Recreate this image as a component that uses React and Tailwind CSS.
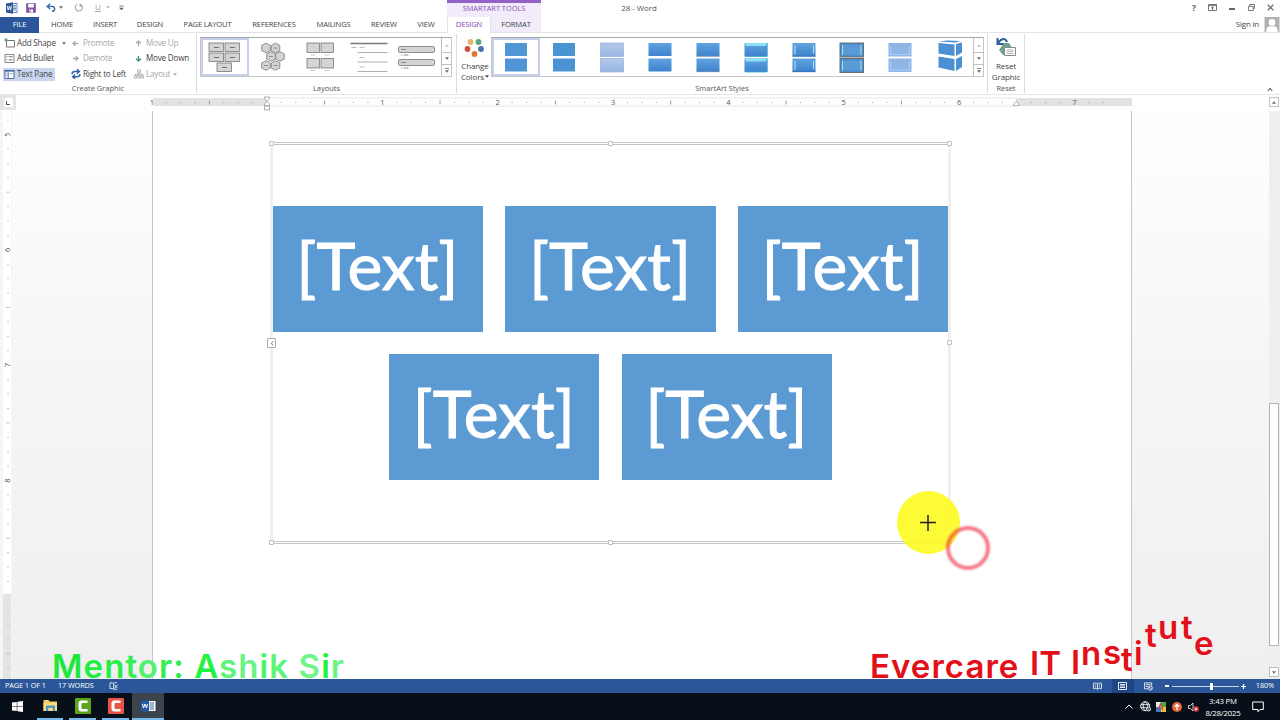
const TABS = [
  { name: 'HOME', cls: 'w-[42px]' },
  { name: 'INSERT', cls: 'w-[44px]' },
  { name: 'DESIGN', cls: 'w-[46px]' },
  { name: 'PAGE LAYOUT', cls: 'w-[69px]' },
  { name: 'REFERENCES', cls: 'w-[64px]' },
  { name: 'MAILINGS', cls: 'w-[55px]' },
  { name: 'REVIEW', cls: 'w-[46px]' },
  { name: 'VIEW', cls: 'w-[38px]' },
];

const INCH = 115.35;

const Caret = ({ className = '' }) => (
  <svg viewBox="0 0 6 4" className={`w-[4px] h-[3px] ${className}`}>
    <path d="M0 0h6L3 4z" fill="currentColor" />
  </svg>
);

const WordIcon = () => (
  <svg viewBox="0 0 12 12" className="w-[12px] h-[12px]">
    <rect x="6" y="1.5" width="5" height="9" fill="#fff" stroke="#2b579a" strokeWidth=".7" />
    <path d="M7 3.5h3M7 5h3M7 6.5h3M7 8h3" stroke="#2b579a" strokeWidth=".7" />
    <path d="M0 1.4 7 .2v11.6L0 10.6z" fill="#2b579a" />
    <path d="m1.3 3.8.9 4.3 1.2-4 1.2 4 .9-4.5" fill="none" stroke="#fff" strokeWidth=".9" />
  </svg>
);

const TitleBar = () => (
  <div className="flex h-[17px] shrink-0 items-center text-[#666]">
    <div className="flex w-[447px] items-center pb-[2px] pl-[6px]">
      <WordIcon />
      <svg viewBox="0 0 10 10" className="ml-[8px] h-[10px] w-[10px]">
        <path d="M.7.7h8.6v8.6H.7z" fill="#80579d" stroke="#80579d" strokeWidth="1" />
        <path d="M2.2 .8h5.6v3.600H2.200zM3 6.500h4v3H3z" fill="#fff" />
        <path d="M3.500 7.200h1.200v2H3.500z" fill="#80579d" />
      </svg>
      <svg viewBox="0 0 10 9" className="ml-[10px] h-[9px] w-[10px]" fill="none" stroke="#3566a8" strokeWidth="1.4">
        <path d="M4.2.8 1.2 3.4 4.2 6M1.4 3.4h4.2c4 0 4 4.6.4 4.9" />
      </svg>
      <Caret className="ml-[3px]" />
      <svg viewBox="0 0 10 10" className="ml-[11px] h-[9px] w-[10px] text-[#aaa]" fill="none" stroke="currentColor" strokeWidth="1.2">
        <path d="M3 1.4a4 4 0 1 0 3.9.1M6.2.5v3h3" />
      </svg>
      <span className="ml-[11px] border-b border-[#aaa] text-[8px] leading-[8px] text-[#999]">U</span>
      <Caret className="ml-[5px] text-[#bbb]" />
      <svg viewBox="0 0 6 6" className="ml-[9px] h-[6px] w-[5px]">
        <path d="M.5.6h5" stroke="#666" />
        <path d="M0 2.7h6L3 5.7z" fill="#666" />
      </svg>
    </div>
    <div className="h-full w-[94px] border-t-[3px] border-[#9262c8] bg-[#f1ebfa] text-center text-[7.4px] leading-[10px] text-[#8a55b8]">
      SMARTART TOOLS
    </div>
    <div className="w-[196px] text-center text-[7.9px] text-[#555]">28 - Word</div>
    <div className="ml-auto flex items-center pb-[2px]">
      <span className="mr-[12px] text-[9px] font-bold leading-none">?</span>
      <svg viewBox="0 0 9 7" className="mr-[12px] h-[7px] w-[9px]" fill="none" stroke="currentColor">
        <path d="M.5.5h8v6h-8zM.5 1.6h8M4.5 6V3M3 4.3 4.5 2.9 6 4.3" strokeWidth=".9" />
      </svg>
      <span className="mr-[13px] mt-[3px] h-[1.3px] w-[6px] bg-[#666]" />
      <svg viewBox="0 0 8 8" className="mr-[12px] h-[7px] w-[7px]" fill="none" stroke="currentColor">
        <path d="M2 2V.6h5.5V5H6M.5 2.6H6v4.8H.5z" />
      </svg>
      <svg viewBox="0 0 8 8" className="mr-[6px] h-[7px] w-[7px]" stroke="currentColor" strokeWidth="1.4">
        <path d="m.8.8 6.4 6.4M7.2.8.8 7.2" />
      </svg>
    </div>
  </div>
);

const TabRow = () => (
  <div className="flex h-[16px] shrink-0 border-b border-[#e3e3e3] text-center text-[7.6px] leading-[15px] tracking-[-0.02em] text-[#444]">
    <div className="mr-[2px] h-[16px] w-[39px] bg-[#2b579a] text-white">FILE</div>
    {TABS.map((t) => (
      <div key={t.name} className={t.cls}>{t.name}</div>
    ))}
    <div className="ml-[2px] h-[16px] w-[44px] border-x border-[#e6dff0] bg-white text-[#8146b5]">DESIGN</div>
    <div className="w-[50px] bg-[#f1ebfa]">FORMAT</div>
    <div className="ml-auto flex text-[7.9px]">
      <span className="mr-[5px]">Sign in</span>
      <svg viewBox="0 0 16 16" className="h-[15px] w-[16px]">
        <path d="M0 0h16v16H0z" fill="#b0b0b0" />
        <circle cx="8" cy="5.8" r="3.6" fill="#fff" />
        <path d="M1.8 16c0-7 3.6-6 6.2-6s6.200-1 6.200 6z" fill="#fff" />
      </svg>
    </div>
  </div>
);

const Arrow = ({ dir, color = '#aaa' }) => {
  const paths = {
    left: 'M7 4H1.200M3.800 1.300 1.200 4l2.600 2.700',
    right: 'M1 4h5.800M4.200 1.300 6.800 4 4.200 6.700',
    up: 'M4 7V1.200M1.300 3.800 4 1.200l2.700 2.600',
    down: 'M4 1v5.800M1.300 4.200 4 6.800l2.700-2.600',
  };
  return (
    <svg viewBox="0 0 8 8" className="h-[7px] w-[7px]" fill="none" stroke={color} strokeWidth="1.500">
      <path d={paths[dir]} />
    </svg>
  );
};

const Command = ({ icon, label, disabled = false, caret = false, className = '' }) => (
  <div className={`flex h-[13px] items-center ${disabled ? 'text-[#a6a6a6]' : 'text-[#444]'} ${className}`}>
    <span className="flex w-[13px] justify-center">{icon}</span>
    <span className="ml-px whitespace-nowrap">{label}</span>
    {caret && <Caret className="ml-[3px]" />}
  </div>
);

const GroupLabel = ({ children }) => (
  <div className="mt-auto h-[9px] text-center text-[7.5px] leading-[9px] text-[#555]">{children}</div>
);

const CreateGraphic = () => (
  <div className="flex w-[197px] flex-col border-r border-[#dcdcdc]">
    <div className="mt-[2.500px] grid grid-cols-[69px_62px_1fr] gap-y-[2.500px] pl-[3px] text-[8.100px] tracking-[-0.2px]">
      <div className="flex items-center">
        <Command
          label="Add Shape"
          icon={
            <svg viewBox="0 0 11 10" className="h-[10px] w-[11px]" fill="none">
              <path d="M2.500 2.500h8v6.500h-8z" stroke="#777" />
              <path d="M2 0v4M0 2h4" stroke="#4d9a7a" strokeWidth="1.200" />
            </svg>
          }
        />
        <Caret className="ml-auto mr-[6px] text-[#666]" />
      </div>
      <Command disabled label="Promote" icon={<Arrow dir="left" />} className="-ml-[3px]" />
      <Command disabled label="Move Up" icon={<Arrow dir="up" />} className="-ml-[2px]" />
      <Command
        label="Add Bullet"
        icon={
          <svg viewBox="0 0 11 10" className="h-[9px] w-[11px]" fill="none">
            <path d="M.5.5h10v9H.5z" stroke="#777" />
            <path d="M2 3h1.200M2 6.500h1.200M4.500 3H9M4.500 6.500H9" stroke="#666" />
          </svg>
        }
      />
      <Command disabled label="Demote" icon={<Arrow dir="right" />} className="-ml-[3px]" />
      <Command label="Move Down" icon={<Arrow dir="down" color="#3f8f6b" />} className="-ml-[2px]" />
      <Command
        label="Text Pane"
        className="w-[52px] bg-[#c9d5ef]"
        icon={
          <svg viewBox="0 0 11 10" className="h-[9px] w-[11px]" fill="none">
            <path d="M.5.5h10v9H.5z" fill="#fff" stroke="#3a6096" />
            <path d="M0 1h11" stroke="#3a6096" strokeWidth="1.500" />
            <path d="M4 2v7" stroke="#3a6096" />
            <path d="M1.500 4h1.500M1.500 6h1.500M5.500 4h3.500" stroke="#8aa5cc" />
          </svg>
        }
      />
      <Command
        label="Right to Left"
        className="-ml-[3px]"
        icon={
          <svg viewBox="0 0 10 10" className="h-[10px] w-[10px]" fill="none" stroke="#2f64a5" strokeWidth="1.500">
            <path d="M1 5.200c0-2.400 1-2.700 3-2.700h4M6 .3l2.300 2.200L6 4.700M9 5c0 2.400-1 2.700-3 2.700H2M4 5.500 1.700 7.700 4 9.800" />
          </svg>
        }
      />
      <Command
        disabled
        caret
        label="Layout"
        className="-ml-[2px]"
        icon={
          <svg viewBox="0 0 11 10" className="h-[10px] w-[10px]" fill="none" stroke="#aaa">
            <path d="M4 .5h3v2.500H4zM.5 6.500h2.500v3H.5zM4.300 6.500h2.500v3H4.300zM8 6.500h2.500v3H8zM5.500 3v3.500M1.700 6.500V5h7.600v1.500" />
          </svg>
        }
      />
    </div>
    <GroupLabel>Create Graphic</GroupLabel>
  </div>
);

const GalleryScroll = () => (
  <div className="ml-auto flex w-[10px] flex-col border-l border-[#c0c0c0]">
    <div className="flex h-[14px] items-center justify-center text-[#c0c0c0]">
      <Caret className="rotate-180" />
    </div>
    <div className="flex h-[13px] items-center justify-center border-y border-[#c0c0c0] text-[#666]">
      <Caret />
    </div>
    <div className="flex flex-1 flex-col items-center justify-center gap-px text-[#666]">
      <span className="h-px w-[4px] bg-[#888]" />
      <Caret />
    </div>
  </div>
);

const hex = (cx, cy) => `M${cx - 5} ${cy}l2.500-4.300h5l2.500 4.300-2.500 4.300h-5z`;

const LAYOUT_ART = [
  <g key="block">
    {[[0, 0], [16, 0], [0, 10], [16, 10], [8, 20]].map(([x, y]) => (
      <g key={`${x}-${y}`}>
        <rect x={8 + x} y={5 + y} width="14.500" height="8.500" />
        <path d={`M${13 + x} ${9.500 + y}h5`} stroke="#555" />
      </g>
    ))}
  </g>,
  <g key="hex">
    {[[17, 10], [26.500, 10], [22, 18.500], [31, 18.500], [17, 27.500], [26.500, 27.500]].map(([x, y], i) => (
      <g key={i}>
        <path d={`M${x} ${y - 4.800}l4.300 2.300v5l-4.300 2.300-4.300-2.300v-5z`} />
        {i % 3 !== 0 && <path d={`M${x - 2} ${y}h4`} />}
      </g>
    ))}
  </g>,
  <g key="caption">
    {[[10, 5], [24, 5], [10, 20.500], [24, 20.500]].map(([x, y]) => (
      <g key={`${x}-${y}`}>
        <rect x={x} y={y} width="12.500" height="9.500" />
        <path d={`M${x + 3.500} ${y + 12}h5`} stroke="#bbb" />
      </g>
    ))}
  </g>,
  <g key="lines">
    <path d="M5.500 5.500h37" stroke="#777" strokeWidth="1.300" />
    <path d="M12.500 14.500h30M12.500 24h30M12.500 33.500h30" stroke="#999" />
    <path d="M6.500 9.500h5M14.500 9.500h5M14.500 19.500h5M14.500 29h5" stroke="#aaa" />
  </g>,
  <g key="bars">
    <rect x="5.500" y="8.500" width="36" height="6" rx="1.500" />
    <rect x="5.500" y="21.500" width="36" height="6" rx="1.500" />
    <path d="M8 11.500h5M8 17h1M10.500 17h5M8 24.500h5M8 30h1M10.500 30h5" />
  </g>,
];

const Layouts = () => (
  <div className="flex w-[260px] flex-col border-r border-[#dcdcdc]">
    <div className="ml-[3px] mt-[3px] flex h-[40px] w-[252px] border border-[#c6c6c6] border-t-[#a8a8a8]">
      {LAYOUT_ART.map((art, i) => (
        <div key={i} className={`h-[38px] w-[48px] ${i === 0 ? 'outline-2 -outline-offset-2 outline-[#c5d1ec]' : ''}`}>
          <svg viewBox="0 0 48 38" className="h-[38px] w-[48px]" fill="#d4d4d4" stroke="#777" strokeWidth=".8">
            {art}
          </svg>
        </div>
      ))}
      <GalleryScroll />
    </div>
    <GroupLabel>Layouts</GroupLabel>
  </div>
);

const StyleTile = ({ kind, y }) => {
  const x = 13;
  if (kind === 'flat') return <rect x={x} y={y} width="22" height="13" fill="#5096d6" />;
  if (kind === 'outline') return <rect x={x} y={y} width="22" height="13" fill="#4a94d4" />;
  if (kind === 'subtle') return <rect x="12.500" y={y} width="23" height="13.500" fill="url(#pale)" stroke="#92afdc" strokeWidth=".7" />;
  if (kind === 'moderate') return <rect x="12.500" y={y} width="23" height="13" fill="url(#deep)" />;
  if (kind === 'intense')
    return (
      <g>
        <rect x="12.500" y={y} width="23" height="13.500" fill="url(#deep)" />
        <path d={`M12.500 ${y + 13.200}h23`} stroke="#8b98ad" strokeWidth=".7" />
      </g>
    );
  if (kind === 'polished')
    return (
      <g>
        <rect x="12.500" y={y} width="23" height="13.500" fill="url(#deep)" />
        <path d={`M12.500 ${y}h23l-2 3h-19z`} fill="#8ce0f5" />
        <path d={`M35 ${y}v13.500h-22`} fill="none" stroke="#3aa9d8" strokeWidth=".8" />
      </g>
    );
  if (kind === 'inset')
    return (
      <g>
        <rect x="12.500" y={y} width="23" height="13.500" fill="url(#deep)" />
        <path d={`M15 ${y + 2.500}v9M33.500 ${y + 2.500}v8`} stroke="#a5e0fa" strokeWidth="1.200" />
        <path d={`M12.500 ${y + 13.200}h23`} stroke="#2f6fb5" strokeWidth=".8" />
      </g>
    );
  if (kind === 'cartoon')
    return (
      <g>
        <rect x="12" y={y} width="23.500" height="14" fill="#4a90d2" stroke="#6b6f70" />
        <rect x="14.500" y={y + 2.200} width="18.500" height="9.500" fill="#5b9bd5" />
        <path d={`M14.500 ${y + 2}v10M33 ${y + 2}v10`} stroke="#a5e0fa" />
      </g>
    );
  return (
    <g>
      <rect x="12.500" y={y} width="23" height="13.500" fill="#8fb4e6" />
      <path d={`M14.500 ${y + 3}v8M33.500 ${y + 3}v8M14 ${y + 11.500}h20`} stroke="#a9d0f2" strokeWidth="1.200" fill="none" />
    </g>
  );
};

const STYLES = ['flat', 'outline', 'subtle', 'moderate', 'intense', 'polished', 'inset', 'cartoon', 'powder'];

const SmartArtStyles = () => (
  <div className="flex w-[531px] flex-col border-r border-[#dcdcdc]">
    <div className="flex h-[46px]">
      <div className="flex w-[34px] flex-col items-center pt-[4px] text-[8px] leading-[10.500px] tracking-[-0.1px] text-[#444]">
        <svg viewBox="0 0 20 20" className="h-[20px] w-[20px] shrink-0">
          <circle cx="6.500" cy="4" r="2.900" fill="#e8b66a" />
          <circle cx="14.500" cy="4" r="2.900" fill="#5da283" />
          <circle cx="3.500" cy="11" r="2.900" fill="#c9503c" />
          <circle cx="17" cy="11" r="2.900" fill="#4672ae" />
          <circle cx="10.500" cy="16" r="2.900" fill="#dd7831" />
        </svg>
        <span className="ml-[2px] mt-[3px]">Change</span>
        <span className="ml-[2px] flex items-center whitespace-nowrap">
          Colors
          <Caret className="ml-px" />
        </span>
      </div>
      <div className="mt-[3px] flex h-[40px] w-[493px] border border-[#c6c6c6] border-t-[#a8a8a8]">
        <svg className="h-0 w-0">
          <defs>
            <linearGradient id="pale" x1="0" y1="0" x2="0" y2="1">
              <stop offset="0" stopColor="#b4c9ea" />
              <stop offset="1" stopColor="#98b6e2" />
            </linearGradient>
            <linearGradient id="deep" x1="0" y1="0" x2="0" y2="1">
              <stop offset="0" stopColor="#61a3e0" />
              <stop offset="1" stopColor="#3c82cc" />
            </linearGradient>
          </defs>
        </svg>
        {STYLES.map((kind, i) => (
          <div key={kind} className={`h-[38px] w-[48px] ${i === 0 ? 'outline-2 -outline-offset-2 outline-[#c5d1ec]' : ''}`}>
            <svg viewBox="0 0 48 38" className="h-[38px] w-[48px]">
              <StyleTile kind={kind} y={5} />
              <StyleTile kind={kind} y={20.500} />
            </svg>
          </div>
        ))}
        <svg viewBox="0 0 48 38" className="h-[38px] w-[48px]">
          <path d="m15 3.500 16 1 6-1.500-14-.5zM14.500 5l16 1.500V18l-16-2.500zM32 6l6-1.500v10L32 18zM14.500 18.500 30.500 21v12l-16-3.500zM32 21l6-3v11l-6 4z" fill="#4a90d2" />
        </svg>
        <GalleryScroll />
      </div>
    </div>
    <GroupLabel>SmartArt Styles</GroupLabel>
  </div>
);

const Ribbon = () => (
  <div className="flex h-[62px] shrink-0 border-b border-[#e6e6e6] pb-px pt-[1px]">
    <CreateGraphic />
    <Layouts />
    <SmartArtStyles />
    <div className="flex w-[37px] flex-col border-r border-[#dcdcdc] text-center text-[8px] leading-[10.500px] tracking-[-0.1px] text-[#444]">
      <svg viewBox="0 0 22 20" className="ml-[7px] mt-[3px] h-[20px] w-[22px]">
        <path d="m4 13 5-7h5l5 8v4H8z" fill="#6da38c" />
        <path d="M2.500 1v6h6M3 6.500C5 2 10 0 12 5" fill="none" stroke="#2f5f96" strokeWidth="2" />
        <path d="M9.500 10.500h11v8h-11z" fill="#fff" stroke="#888" />
        <path d="M11.500 13h7M11.500 14.700h7M11.500 16.500h7" stroke="#999" strokeWidth=".7" />
      </svg>
      <span className="mt-[4px]">Reset</span>
      <span>Graphic</span>
      <GroupLabel>Reset</GroupLabel>
    </div>
    <svg viewBox="0 0 8 6" className="mb-[1px] ml-auto mr-[7px] h-[5px] w-[6px] self-end" fill="none" stroke="#666" strokeWidth="1.500">
      <path d="M1 5l3-3.500L7 5" />
    </svg>
  </div>
);

const HorizontalRuler = () => {
  const marks = [];
  for (let i = -7; i <= 58; i++) {
    const x = 267 - 16 + (i * INCH) / 8;
    if (i === 0 || i === 52) continue;
    if (i % 8 === 0) {
      marks.push(
        <text key={i} x={x} y="10" textAnchor="middle" fontSize="7.500" fill="#555">{i / 8}</text>
      );
    } else {
      const h = i % 4 === 0 ? 4 : 1;
      marks.push(<path key={i} d={`M${x} ${7.500 - h / 2}v${h}`} stroke="#999" strokeWidth="1" />);
    }
  }
  return (
    <svg className="h-[16px] w-[1120px]">
      <path d="M137 3h979v8H137z" fill="#e2e2e2" />
      <path d="M251 3h749v8H251z" fill="#fff" />
      <path d="M251 3h749M251 11h749" stroke="#e0e0e0" strokeWidth=".8" />
      <text x="136" y="10" textAnchor="middle" fontSize="7.500" fill="#555">1</text>
      {marks}
      <path d="M248.500 2h5v1.500l-2.500 3-2.500-3zM248.500 10.500v-1.500l2.500-2.500 2.500 2.500v1.500zM248.500 11h5v4h-5zM997.500 10.500v-1.500l2.700-2.500 2.700 2.500v1.500z" fill="#fff" stroke="#999" strokeWidth=".8" />
    </svg>
  );
};

const VerticalRuler = () => {
  const marks = [];
  for (let i = -1; i < 38; i++) {
    const y = 134.500 - 111 + (i * INCH) / 8;
    if (i === 32) continue;
    if (i % 8 === 0) {
      marks.push(
        <text key={i} x="10" y={y} transform={`rotate(-90 10 ${y})`} textAnchor="middle" fontSize="7.500" fill="#555">
          {5 + i / 8}
        </text>
      );
    } else {
      const w = i % 4 === 0 ? 4 : 2;
      marks.push(<path key={i} d={`M${8 - w / 2} ${y}h${w}`} stroke="#bbb" strokeWidth=".8" />);
    }
  }
  return (
    <svg className="h-full w-[12px] shrink-0">
      <path d="M0 0h12v568H0z" fill="#f5f5f5" />
      <path d="M3 0h8v483H3z" fill="#fff" />
      <path d="M3 483h8v85H3z" fill="#e3e5e4" />
      {marks}
    </svg>
  );
};

const TextBlock = () => (
  <div className="flex h-[126px] w-[210.400px] items-center justify-center bg-[#5b9ad3] font-[Lato,sans-serif] text-[66px] leading-none text-white">
    <span className="-mt-[8px] mr-[1px] [-webkit-text-stroke:1px_white]">[Text]</span>
  </div>
);

const Handle = ({ className }) => (
  <span className={`absolute h-[5px] w-[5px] rounded-[1px] border border-[#bdbdbd] bg-white ${className}`} />
);

const SmartArt = () => (
  <div className="relative ml-[117px] mt-[31px] flex h-[402px] w-[681px] flex-col items-center gap-[22px] border-[3px] border-x-[#f0f0f0] border-y-[#c4c4c4] [border-style:double_solid] pt-[61px]">
    <div className="flex gap-[22.200px]">
      <TextBlock />
      <TextBlock />
      <TextBlock />
    </div>
    <div className="flex gap-[22.200px]">
      <TextBlock />
      <TextBlock />
    </div>
    <Handle className="-left-[4px] -top-[4px]" />
    <Handle className="-top-[4px] left-[335px]" />
    <Handle className="-right-[4px] -top-[4px]" />
    <Handle className="-right-[4px] top-[195px]" />
    <Handle className="-bottom-[4px] -left-[4px]" />
    <Handle className="-bottom-[4px] left-[335px]" />
    <span className="absolute -left-[6px] top-[193px] flex h-[10px] w-[9px] items-center justify-center rounded-[1px] border border-[#aaa] bg-white">
      <svg viewBox="0 0 4 6" className="h-[5px] w-[4px]" fill="none" stroke="#555">
        <path d="M3.500.5 1 3l2.500 2.500" />
      </svg>
    </span>
  </div>
);

const ScrollArrow = ({ up = false }) => (
  <div className="flex h-[10px] w-[10px] shrink-0 items-center justify-center border border-[#c0c0c0] bg-white text-[#666]">
    <Caret className={up ? 'rotate-180' : ''} />
  </div>
);

const Workspace = () => (
  <div className="flex h-[584px] shrink-0 flex-col bg-linear-to-b from-white via-[#f5f5f6] via-50% to-[#efefef]">
    <div className="flex h-[16px] shrink-0">
      <div className="flex h-[15px] w-[16px] items-center justify-center bg-[#e4e4e4]">
        <div className="flex h-[9px] w-[9px] items-center justify-center bg-white">
          <span className="h-[4px] w-[4px] border-b border-l border-[#555]" />
        </div>
      </div>
      <HorizontalRuler />
      <div className="ml-auto w-[11px] pt-[2px]">
        <ScrollArrow up />
      </div>
    </div>
    <div className="flex flex-1">
      <VerticalRuler />
      <div className="ml-[140px] w-[980px] border-x border-[#c6c6c6] bg-white">
        <SmartArt />
      </div>
      <div className="ml-auto flex w-[11px] flex-col bg-[#efefef]">
        <div className="mt-[292px] h-[243px] w-[10px] border border-[#b4b4b4] bg-white" />
        <div className="mt-auto pb-[2px]">
          <ScrollArrow />
        </div>
      </div>
    </div>
  </div>
);

const StatusBar = () => (
  <div className="flex h-[14px] shrink-0 items-center bg-[#2b579a] text-[7.3px] leading-none tracking-[-0.1px] text-white">
    <span className="ml-[5px] w-[53px]">PAGE 1 OF 1</span>
    <span className="w-[51px]">17 WORDS</span>
    <svg viewBox="0 0 10 9" className="h-[8px] w-[10px]" fill="none" stroke="#fff" strokeWidth=".9">
      <path d="M4.500 1.500C3.500.5 2 .6.500 1v6.500c1.500-.4 3-.4 4 .5zM4.500 1.500C5.500.5 7 .6 8.500 1M5.500 3l3.500 4M9 3 5.500 7M4.500 8.200h4" />
    </svg>
    <div className="ml-auto flex items-center">
      <svg viewBox="0 0 10 8" className="mr-[10px] h-[8px] w-[9px]" fill="none" stroke="#fff" strokeWidth=".9">
        <path d="M5 1.500C4 .6 2 .6.500 1v6c1.500-.4 3.500-.4 4.500.5C6 6.600 8 6.600 9.500 7V1C8 .6 6 .6 5 1.500v6M2 3h1.500M2 5h1.500M6.500 3H8M6.500 5H8" />
      </svg>
      <span className="mr-[10px] flex h-[14px] w-[22px] items-center justify-center bg-[#1f4683]">
        <svg viewBox="0 0 9 8" className="h-[8px] w-[9px]" fill="none" stroke="#fff">
          <path d="M.5.5h8v7h-8zM2 2.500h5M2 4h5M2 5.500h5" strokeWidth=".9" />
        </svg>
      </span>
      <svg viewBox="0 0 10 9" className="mr-[12px] h-[9px] w-[9px]" fill="none" stroke="#fff" strokeWidth=".9">
        <path d="M4.500 7H.5V.5h8v3M2 2.500h5M2 4.500h2.500" />
        <circle cx="7" cy="6.200" r="2.300" />
        <path d="M5.500 5l3 2.500" />
      </svg>
      <span className="h-[1.500px] w-[4px] bg-white" />
      <span className="ml-[3px] flex h-[8px] w-[67px] items-center">
        <span className="h-px w-[38px] bg-[#c8d5ea]" />
        <span className="h-[7px] w-[3px] bg-white" />
        <span className="h-px flex-1 bg-[#c8d5ea]" />
      </span>
      <svg viewBox="0 0 6 6" className="ml-[2px] h-[5px] w-[5px]" stroke="#fff" strokeWidth="1.400">
        <path d="M3 0v6M0 3h6" />
      </svg>
      <span className="ml-[10px] mr-[6px]">180%</span>
    </div>
  </div>
);

const Camtasia = ({ color }) => (
  <svg viewBox="0 0 16 16" className="h-[16px] w-[16px]">
    <rect width="16" height="16" rx="1" fill={color} />
    <path d="M12.500 2.500h-6Q3.500 2.500 3.500 5.500v5q0 3 3 3h6V11H7.500Q6.500 11 6.500 10V6q0-1 1-1h5z" fill="#fff" />
  </svg>
);

const Taskbar = () => (
  <div className="flex h-[27px] shrink-0 bg-[#071018]">
    <div className="flex w-[34px] items-center justify-center">
      <svg viewBox="0 0 12 12" className="h-[11px] w-[11px]" fill="#fff">
        <path d="M0 1.700 5.200 1v4.700H0zM5.800.9 12 0v5.700H5.800zM0 6.300h5.200V11L0 10.300zM5.800 6.300H12V12l-6.200-.9z" />
      </svg>
    </div>
    <div className="ml-[3px] flex w-[26px] items-center justify-center border-b-2 border-[#76b9ed]">
      <svg viewBox="0 0 15 13" className="h-[13px] w-[15px]">
        <path d="M.5 1h5l1.200 1.500H14V12H.5z" fill="#f4cf65" />
        <path d="M.5 4h13.500v8H.5z" fill="#fadb7f" />
        <path d="M3 6.500h9V12H9.800V9H5.200v3H3z" fill="#4a96c8" />
      </svg>
    </div>
    <div className="ml-[6px] flex w-[27px] items-center justify-center border-b-2 border-[#76b9ed]">
      <Camtasia color="#5aa51c" />
    </div>
    <div className="ml-[6px] flex w-[27px] items-center justify-center border-b-2 border-[#76b9ed]">
      <Camtasia color="#e85548" />
    </div>
    <div className="ml-[3px] flex w-[32px] items-center justify-center border-b-2 border-[#76b9ed] bg-[#3b444c]">
      <svg viewBox="0 0 15 12" className="h-[12px] w-[15px]">
        <path d="M7 1h7.500v10H7z" fill="#fff" />
        <path d="M8.500 3h4.500M8.500 5h4.500M8.500 7h4.500M8.500 9h4.500" stroke="#2b579a" strokeWidth=".9" />
        <path d="M0 1.200 8 0v12l-8-1.200z" fill="#2459a8" />
        <path d="m1.500 4 1 4 1.500-4 1.500 4 1-4" fill="none" stroke="#fff" />
      </svg>
    </div>
    <div className="ml-auto flex items-center text-white">
      <svg viewBox="0 0 8 5" className="mr-[7px] h-[5px] w-[8px]" fill="none" stroke="#fff">
        <path d="M.5 4.500 4 1l3.500 3.500" />
      </svg>
      <svg viewBox="0 0 11 11" className="mr-[5px] h-[11px] w-[11px]" fill="none" stroke="#fff" strokeWidth=".9">
        <circle cx="5.200" cy="5.200" r="4.500" />
        <path d="M.7 3.700h9M.7 6.700h6M5.200.7C2.500 3 2.500 7 5.200 9.700M5.200.7c2 1.500 2.500 3 2.300 5" />
        <circle cx="8.500" cy="8" r="2" fill="#071018" />
        <path d="m7.200 6.700 2.600 2.600" />
      </svg>
      <svg viewBox="0 0 10 10" className="mr-[6px] h-[10px] w-[10px]">
        <path d="M0 0h5v5H0z" fill="#e8eef0" />
        <path d="M5 0h5v5H5z" fill="#4aa843" />
        <path d="M0 5h5v5H0z" fill="#377bc9" />
        <path d="M5 5h5v5H5z" fill="#f0bf31" />
        <path d="M2 8 4.500 2 7 8" fill="none" stroke="#d8443a" strokeWidth="1.300" />
      </svg>
      <svg viewBox="0 0 10 10" className="mr-[6px] h-[10px] w-[10px]">
        <circle cx="5" cy="5" r="5" fill="#e9683c" />
        <path d="M5 8V2.500M2.800 4.700 5 2.500l2.200 2.200" fill="none" stroke="#fff" strokeWidth="1.300" />
      </svg>
      <svg viewBox="0 0 11 10" className="mr-[6px] h-[10px] w-[11px]">
        <path d="M.5 3.500h2L5 1v8L2.500 6.500h-2z" fill="none" stroke="#fff" strokeWidth=".8" />
        <circle cx="8" cy="7" r="2.800" fill="#e23b46" />
        <path d="m6.900 5.900 2.200 2.200M9.100 5.900 6.900 8.100" stroke="#fff" strokeWidth=".8" />
      </svg>
      <div className="w-[36px] text-center text-[7.800px] leading-[12px] tracking-[-0.2px]">
        <div>3:43 PM</div>
        <div>8/28/2025</div>
      </div>
      <svg viewBox="0 0 12 12" className="ml-[11px] mr-[16px] h-[12px] w-[12px]" fill="none" stroke="#fff">
        <path d="M.7 1h10.600v7.500H8L6 10.800 6 8.500H.7z" />
      </svg>
    </div>
  </div>
);

const MENTOR = [
  ['M', 'text-[#1ee83f]'], ['e', 'text-[#1fee42]'], ['n', 'text-[#25ef47]'], ['t', 'text-[#35ee54]'],
  ['o', 'text-[#52f06c]'], ['r', 'text-[#35ee54]'], [':', 'text-[#2bef4c]'], [' ', ''],
  ['A', 'text-[#1ff540]'], ['s', 'text-[#5cf578]'], ['h', 'text-[#6bf485]'], ['i', 'text-[#4bf367]'],
  ['k', 'text-[#5cf578]'], [' ', ''], ['S', 'text-[#71f48a]'], ['i', 'text-[#1ff540]'], ['r', 'text-[#6bf485]'],
];

// last word of the banner, each letter caught mid-bounce
const BOUNCE = [
  { ch: 'n', cls: 'left-[1081px] top-[633px]' },
  { ch: 's', cls: 'left-[1103px] top-[632px]' },
  { ch: 't', cls: 'left-[1121px] top-[639px]' },
  { ch: 'i', cls: 'left-[1134px] top-[633px]' },
  { ch: 't', cls: 'left-[1145px] top-[615px]' },
  { ch: 'u', cls: 'left-[1158px] top-[607px]' },
  { ch: 't', cls: 'left-[1181px] top-[607px]' },
  { ch: 'e', cls: 'left-[1194px] top-[623px]' },
];

const Overlays = () => (
  <div className="pointer-events-none absolute inset-0 font-[Inter,sans-serif] text-[33px] font-semibold leading-[40px]">
    <div className="absolute left-[52px] top-[646px] whitespace-pre tracking-[1.080px]">
      {MENTOR.map(([ch, cls], i) => (
        <span key={i} className={cls}>{ch}</span>
      ))}
    </div>
    <div className="text-[#e31019]">
      <span className="absolute left-[870px] top-[646px] whitespace-pre tracking-[1.050px]">Evercare</span>
      <span className="absolute left-[1030px] top-[643px]">IT</span>
      <span className="absolute left-[1071px] top-[642px]">I</span>
      {BOUNCE.map(({ ch, cls }) => (
        <span key={cls} className={`absolute ${cls}`}>{ch}</span>
      ))}
    </div>
    <div className="absolute left-[897px] top-[491px] h-[63px] w-[63px] rounded-full bg-[#fdfb2c] opacity-95 blur-[0.7px]" />
    <svg viewBox="0 0 16 16" className="absolute left-[920px] top-[515px] h-[16px] w-[16px]" stroke="#222" strokeWidth="1.500">
      <path d="M8 0v16M0 7.500h16" />
    </svg>
    <div className="absolute left-[946px] top-[526px] h-[44px] w-[44px] rounded-full border-[4px] border-[#ec1c34]/60 blur-[0.8px]" />
  </div>
);

export default function App() {
  return (
    <div className="relative flex h-[720px] w-[1280px] flex-col overflow-hidden bg-white font-['Open_Sans',sans-serif]">
      <TitleBar />
      <TabRow />
      <Ribbon />
      <Workspace />
      <StatusBar />
      <Taskbar />
      <Overlays />
    </div>
  );
}
